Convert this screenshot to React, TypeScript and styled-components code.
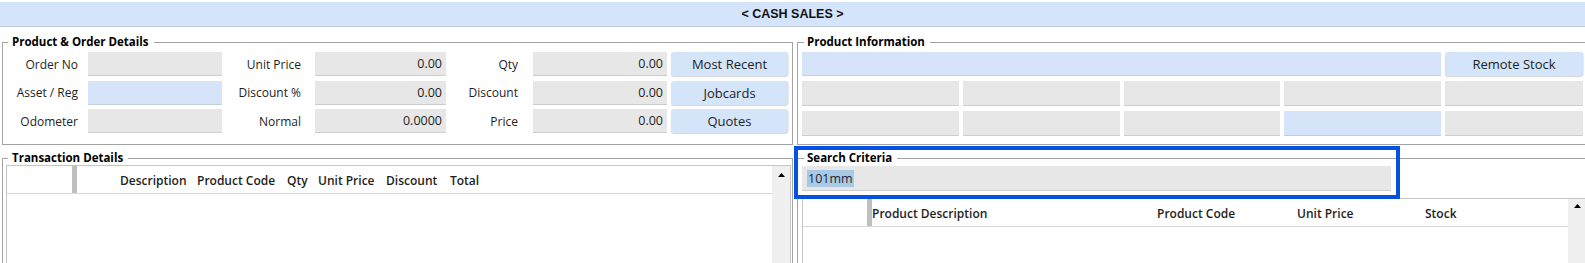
import React from "react";
import styled, { createGlobalStyle } from "styled-components";

const GlobalStyle = createGlobalStyle`
    html, body {
        margin: 0;
        padding: 0;
        background: #ffffff;
        overflow: hidden;
    }

    body {
        font-family: "Open Sans", "Noto Sans", sans-serif;
        font-size: 12px;
        color: #1b1b1b;
    }
`;

const Page = styled.div`
    width: 1585px;
    height: 263px;
    padding-top: 2px;
    box-sizing: border-box;
    overflow: hidden;
`;

const TitleBar = styled.div`
    height: 25px;
    box-sizing: border-box;
    background: #d4e4fa;
    border-bottom: 1px solid #c2cad6;
    display: flex;
    align-items: center;
    justify-content: center;
    font-family: "Liberation Sans", Arial, sans-serif;
    font-weight: 700;
    font-size: 12.5px;
    color: #111111;
`;

const Main = styled.div`
    display: grid;
    grid-template-columns: 794px 791px;
    grid-template-rows: 118px 118px;
`;

const Cell = styled.div`
    position: relative;
    display: flex;
    min-width: 0;
`;

const Group = styled.fieldset<{ $side: "left" | "right"; $top: number; $pad: string }>`
    flex: 1;
    min-width: 0;
    box-sizing: border-box;
    margin: ${p => (p.$side === "left" ? `${p.$top}px 1px 0 2px` : `${p.$top}px -3px 0 3px`)};
    margin-bottom: ${p => (p.$top === 5 ? "-12px" : "0")};
    padding: ${p => p.$pad};
    border: 1px solid #a3a3a3;
`;

const Legend = styled.legend<{ $offset: number; $lead: number }>`
    margin-left: ${p => p.$offset}px;
    padding: 0 5px 0 ${p => p.$lead}px;
    font-family: "Open Sans", "Noto Sans", sans-serif;
    font-weight: 700;
    font-size: 11.5px;
    line-height: 16px;
    color: #000000;
`;

const OrderGrid = styled.div`
    display: grid;
    grid-template-columns: 81px 134px 85px 131px 79px 134px 117px;
    grid-template-rows: 24px 24px 24px;
    column-gap: 4px;
    row-gap: 4.5px;
    margin-top: 2px;
`;

const Label = styled.div<{ $pad: number }>`
    display: flex;
    align-items: center;
    justify-content: flex-end;
    padding-right: ${p => p.$pad}px;
    font-size: 12px;
    color: #1e1e1e;
    white-space: nowrap;
`;

const Field = styled.div<{ $tone?: "gray" | "blue" }>`
    box-sizing: border-box;
    display: flex;
    align-items: center;
    justify-content: flex-end;
    padding: 0 4px;
    background: ${p => (p.$tone === "blue" ? "#d5e4f8" : "#e7e7e7")};
    border-bottom: 1px solid ${p => (p.$tone === "blue" ? "#c3cfdd" : "#cdcdcd")};
    font-size: 12.5px;
    color: #1e1e1e;
`;

const WideField = styled(Field)`
    grid-column: 1 / span 4;
`;

const ActionButton = styled.button`
    margin: 0;
    padding: 0;
    border: none;
    border-radius: 3px;
    background: #d4e4f9;
    box-shadow: 0 1px 1px rgba(0, 0, 0, 0.16), 1px 0 1px rgba(0, 0, 0, 0.08);
    font-family: "Open Sans", "Noto Sans", sans-serif;
    font-size: 13px;
    color: #1e1e1e;
    text-align: center;
    cursor: pointer;
`;

const InfoGrid = styled.div`
    display: grid;
    grid-template-columns: repeat(4, 1fr) 138px;
    grid-template-rows: 24px 25px 25px;
    column-gap: 4px;
    row-gap: 5px;
    margin-top: 2px;
`;

const List = styled.div<{ $lift: number }>`
    display: flex;
    height: 110px;
    margin-top: ${p => p.$lift}px;
    border: 1px solid #c6c6c6;
    background: #ffffff;
`;

const ListBody = styled.div`
    flex: 1;
    min-width: 0;
`;

const HeaderRow = styled.div`
    display: flex;
    height: 28px;
    padding-top: 1px;
    box-sizing: border-box;
    border-bottom: 1px solid #dadada;
    font-weight: 600;
    font-size: 12px;
    color: #1e1e1e;
`;

const RowHead = styled.div<{ $w: number }>`
    width: ${p => p.$w}px;
    flex: none;
`;

const Divider = styled.div`
    width: 5px;
    flex: none;
    margin-top: -1px;
    background: #bfbfbf;
`;

const HeadCell = styled.div<{ $w?: number }>`
    width: ${p => (p.$w ? `${p.$w}px` : "auto")};
    flex: ${p => (p.$w ? "none" : "1")};
    display: flex;
    align-items: center;
    white-space: nowrap;
`;

const ScrollBar = styled.div<{ $top: number }>`
    width: 18px;
    flex: none;
    display: flex;
    justify-content: center;
    padding-top: ${p => p.$top}px;
    box-sizing: border-box;
    background: #f0f0f0;
`;

const SearchBox = styled.div`
    width: 589px;
    height: 25px;
    box-sizing: border-box;
    display: flex;
    align-items: center;
    padding-left: 5px;
    background: #e7e7e7;
    border-bottom: 1px solid #cdcdcd;
    font-size: 12.5px;
    color: #1e2630;
`;

const Selected = styled.span`
    background: #a8c9e6;
    padding: 0 1px;
    line-height: 17px;
`;

const FocusFrame = styled.div`
    position: absolute;
    top: 1px;
    left: 0;
    width: 606px;
    height: 53px;
    box-sizing: border-box;
    border: 4px solid #0552e2;
    pointer-events: none;
    z-index: 2;
`;

const UpArrow: React.FC = () => (
    <svg width="7" height="4" viewBox="0 0 7 4">
        <path d="M3.5 0 L7 4 L0 4 Z" fill="#000000" />
    </svg>
);

const orderRows = [
    { a: "Order No", aTone: "gray", b: "Unit Price", bVal: "0.00", c: "Qty", cVal: "0.00", btn: "Most Recent" },
    { a: "Asset / Reg", aTone: "blue", b: "Discount %", bVal: "0.00", c: "Discount", cVal: "0.00", btn: "Jobcards" },
    { a: "Odometer", aTone: "gray", b: "Normal", bVal: "0.0000", c: "Price", cVal: "0.00", btn: "Quotes" },
] as const;

const transColumns: { label: string; w?: number }[] = [
    { label: "", w: 43 },
    { label: "Description", w: 77 },
    { label: "Product Code", w: 90 },
    { label: "Qty", w: 31 },
    { label: "Unit Price", w: 68 },
    { label: "Discount", w: 64 },
    { label: "Total" },
];

const productColumns: { label: string; w?: number }[] = [
    { label: "Product Description", w: 285 },
    { label: "Product Code", w: 140 },
    { label: "Unit Price", w: 128 },
    { label: "Stock" },
];

export default function App() {
    return (
        <Page>
            <GlobalStyle />
            <TitleBar>&lt; CASH SALES &gt;</TitleBar>
            <Main>
                <Cell>
                    <Group $side="left" $top={7} $pad="0 0 0 0">
                        <Legend $offset={5} $lead={4}>
                            Product &amp; Order Details
                        </Legend>
                        <OrderGrid>
                            {orderRows.map(row => (
                                <React.Fragment key={row.a}>
                                    <Label $pad={6}>{row.a}</Label>
                                    <Field $tone={row.aTone} />
                                    <Label $pad={10}>{row.b}</Label>
                                    <Field>{row.bVal}</Field>
                                    <Label $pad={11}>{row.c}</Label>
                                    <Field>{row.cVal}</Field>
                                    <ActionButton>{row.btn}</ActionButton>
                                </React.Fragment>
                            ))}
                        </OrderGrid>
                    </Group>
                </Cell>
                <Cell>
                    <Group $side="right" $top={7} $pad="0 4px 0 4px">
                        <Legend $offset={2} $lead={3}>
                            Product Information
                        </Legend>
                        <InfoGrid>
                            <WideField $tone="blue" />
                            <ActionButton>Remote Stock</ActionButton>
                            <Field />
                            <Field />
                            <Field />
                            <Field />
                            <Field />
                            <Field />
                            <Field />
                            <Field />
                            <Field $tone="blue" />
                            <Field />
                        </InfoGrid>
                    </Group>
                </Cell>
                <Cell>
                    <Group $side="left" $top={5} $pad="0 1px 0 3px">
                        <Legend $offset={2} $lead={4}>
                            Transaction Details
                        </Legend>
                        <List $lift={-1}>
                            <ListBody>
                                <HeaderRow>
                                    <RowHead $w={65} />
                                    <Divider />
                                    {transColumns.map((col, i) => (
                                        <HeadCell key={i} $w={col.w}>
                                            {col.label}
                                        </HeadCell>
                                    ))}
                                </HeaderRow>
                            </ListBody>
                            <ScrollBar $top={7}>
                                <UpArrow />
                            </ScrollBar>
                        </List>
                    </Group>
                </Cell>
                <Cell>
                    <FocusFrame />
                    <Group $side="right" $top={5} $pad="0 0 0 4px">
                        <Legend $offset={2} $lead={3}>
                            Search Criteria
                        </Legend>
                        <SearchBox>
                            <Selected>101mm</Selected>
                        </SearchBox>
                        <List $lift={7}>
                            <ListBody>
                                <HeaderRow>
                                    <RowHead $w={64} />
                                    <Divider />
                                    {productColumns.map((col, i) => (
                                        <HeadCell key={i} $w={col.w}>
                                            {col.label}
                                        </HeadCell>
                                    ))}
                                </HeaderRow>
                            </ListBody>
                            <ScrollBar $top={5}>
                                <UpArrow />
                            </ScrollBar>
                        </List>
                    </Group>
                </Cell>
            </Main>
        </Page>
    );
}
